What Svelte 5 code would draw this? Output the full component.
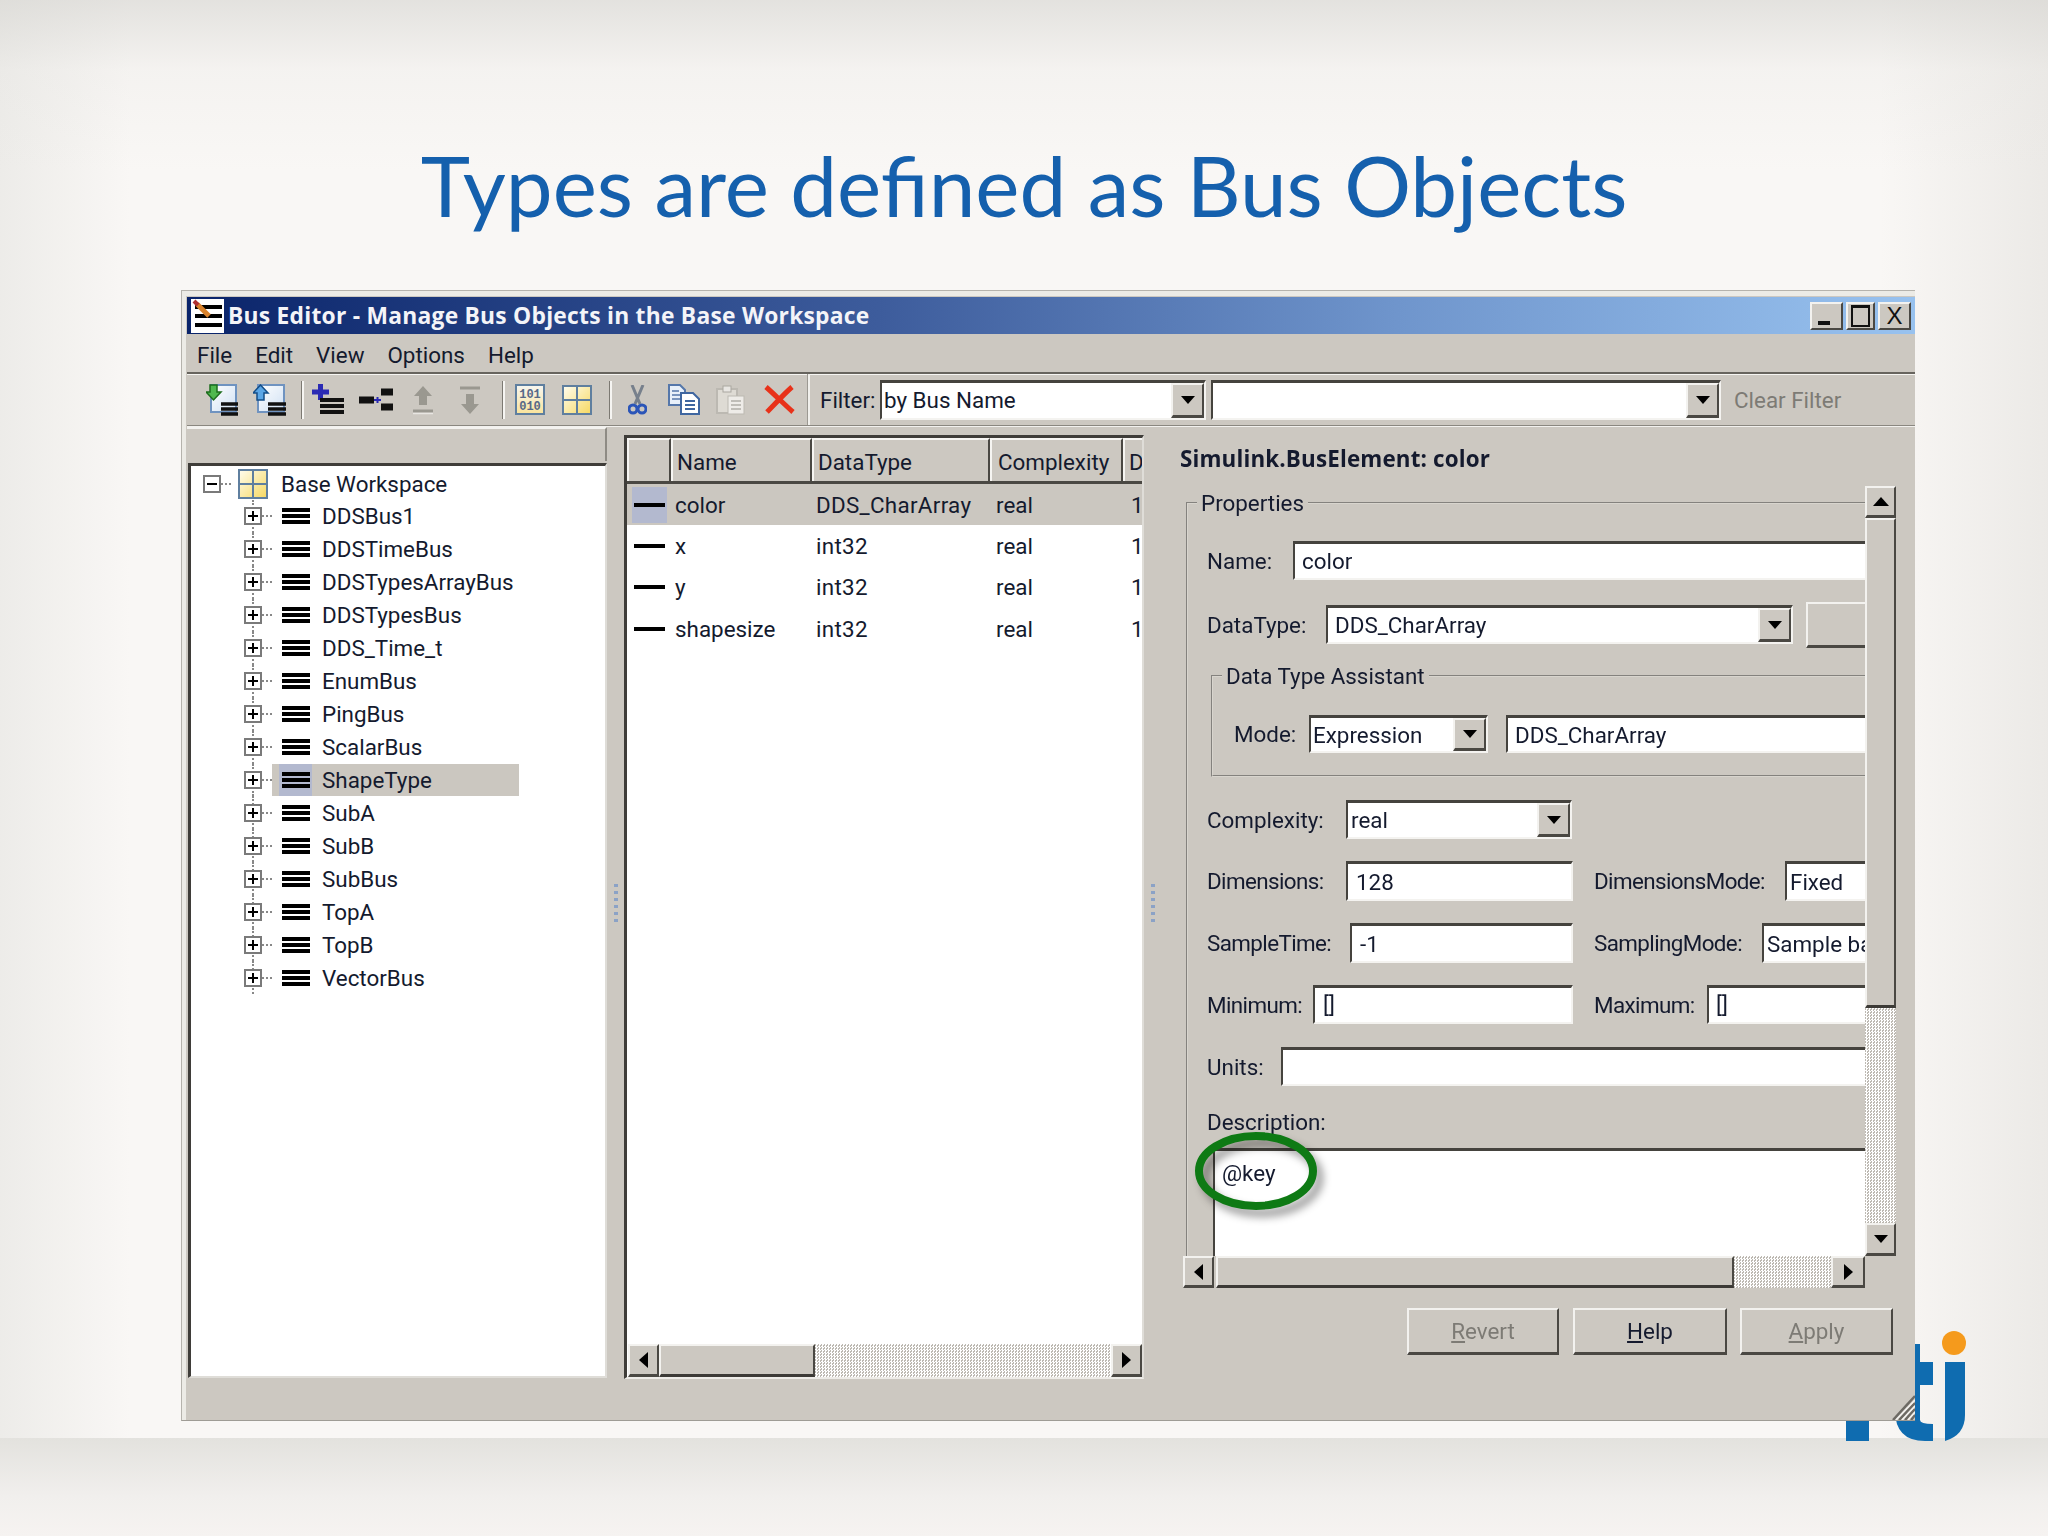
<script>
  const buses = ['DDSBus1','DDSTimeBus','DDSTypesArrayBus','DDSTypesBus','DDS_Time_t','EnumBus','PingBus','ScalarBus','ShapeType','SubA','SubB','SubBus','TopA','TopB','VectorBus'];
  const rows = [
    { n: 'color', t: 'DDS_CharArray', c: 'real', d: '1', sel: true },
    { n: 'x', t: 'int32', c: 'real', d: '1' },
    { n: 'y', t: 'int32', c: 'real', d: '1' },
    { n: 'shapesize', t: 'int32', c: 'real', d: '1' }
  ];
</script>

{#snippet gridIcon(w, h)}
  <svg class="ico" width={w} height={h} viewBox="0 0 30 30">
    <defs><linearGradient id="yg" x1="0" y1="0" x2="1" y2="1"><stop offset="0" stop-color="#fffdf0"/><stop offset="1" stop-color="#f6d860"/></linearGradient></defs>
    <rect x="1" y="1" width="28" height="28" fill="url(#yg)" stroke="#5f7f9f" stroke-width="2"/>
    <path d="M15 1V29M1 15H29" stroke="#5f7f9f" stroke-width="2"/>
  </svg>
{/snippet}

{#snippet arrowBtn()}
  <span class="btn3d drop"><i class="arr down"></i></span>
{/snippet}

<div class="slide">
  <h1>Types are defined as Bus Objects</h1>

  <div class="window">
    <div class="titlebar">
      <svg class="appicon" width="33" height="34" viewBox="0 0 33 34">
        <rect width="33" height="34" fill="#fff"/>
        <path d="M4 8H31M4 17H31M4 26H31" stroke="#000" stroke-width="4"/>
        <path d="M6 5L18 17" stroke="#d9822b" stroke-width="5"/>
        <path d="M3 2L7 6" stroke="#b03030" stroke-width="4"/>
      </svg>
      <span class="wintitle">Bus Editor - Manage Bus Objects in the Base Workspace</span>
      <div class="winbtns">
        <span class="wbtn"><i class="w-min"></i></span>
        <span class="wbtn wm"><i class="w-max"></i></span>
        <span class="wbtn w-x">X</span>
      </div>
    </div>

    <div class="menu">
      <span>File</span><span>Edit</span><span>View</span><span>Options</span><span>Help</span>
    </div>

    <div class="tools">
      <svg class="ico" width="32" height="32" viewBox="0 0 32 32">
        <defs><linearGradient id="pg" x1="0" y1="0" x2="1" y2="1"><stop offset="0" stop-color="#fff"/><stop offset="1" stop-color="#cfe0f3"/></linearGradient></defs>
        <rect x="5" y="1" width="25" height="27" fill="url(#pg)" stroke="#6f93c0" stroke-width="2"/>
        <path d="M15 20H32M15 25H32M15 30H32" stroke="#111" stroke-width="3.5"/>
        <path d="M4 1H11V8H15L7.500 16L0 8H4Z" fill="#4fb84f" stroke="#1d6d1d" stroke-width="1.500"/>
      </svg>
      <svg class="ico ml15" width="33" height="32" viewBox="0 0 33 32">
        <rect x="5" y="1" width="26" height="27" fill="url(#pg)" stroke="#6f93c0" stroke-width="2"/>
        <path d="M15 20H33M15 25H33M15 30H33" stroke="#111" stroke-width="3.500"/>
        <path d="M4 16H11V9H15L7.500 1L0 9H4Z" fill="#5aa6e6" stroke="#134d88" stroke-width="1.500"/>
      </svg>
      <i class="sep ml15"></i>
      <svg class="ico ml8" width="33" height="31" viewBox="0 0 33 31">
        <path d="M0 8H17M8.500 0V16" stroke="#2a2ab4" stroke-width="5"/>
        <path d="M8 16H32M8 22H32M8 28H32" stroke="#111" stroke-width="4"/>
      </svg>
      <svg class="ico ml14" width="34" height="24" viewBox="0 0 34 24">
        <path d="M0 12H15M22 4H34M22 19H34" stroke="#111" stroke-width="7"/>
        <path d="M15 12H22M18.500 9V15" stroke="#2a2ab4" stroke-width="2"/>
      </svg>
      <svg class="ico ml20" width="20" height="30" viewBox="0 0 20 30">
        <path d="M10 1L19 11H14V20H6V11H1Z" fill="#9a9890"/><path d="M0 26H20" stroke="#9a9890" stroke-width="3"/><path d="M0 28.500H20" stroke="#e8e6e2" stroke-width="1.500"/>
      </svg>
      <svg class="ico ml27" width="20" height="30" viewBox="0 0 20 30">
        <path d="M0 3H20" stroke="#9a9890" stroke-width="3"/><path d="M10 29L19 19H14V9H6V19H1Z" fill="#9a9890"/>
      </svg>
      <i class="sep ml22"></i>
      <svg class="ico ml10" width="30" height="31" viewBox="0 0 30 31">
        <defs><linearGradient id="yg2" x1="0" y1="0" x2="0" y2="1"><stop offset="0" stop-color="#f6f6f2"/><stop offset="1" stop-color="#fae39a"/></linearGradient></defs>
        <rect x="1" y="1" width="28" height="29" fill="url(#yg2)" stroke="#5f7f9f" stroke-width="2"/>
        <text x="15" y="13.500" class="bits">101</text>
        <text x="15" y="26" class="bits">010</text>
      </svg>
      <span class="ml17 inl">{@render gridIcon(30, 30)}</span>
      <i class="sep ml17"></i>
      <svg class="ico ml16" width="19" height="30" viewBox="0 0 19 30">
        <path d="M4 0L12 19M15 0L7 19" stroke="#77808c" stroke-width="3"/>
        <circle cx="5" cy="24" r="4" fill="none" stroke="#2b55b8" stroke-width="3"/>
        <circle cx="14" cy="24" r="4" fill="none" stroke="#2b55b8" stroke-width="3"/>
      </svg>
      <svg class="ico ml21" width="32" height="31" viewBox="0 0 32 31">
        <path d="M1 1H12L17 6V21H1Z" fill="#e8f0fa" stroke="#5577aa" stroke-width="2"/>
        <path d="M4 7H11M4 11H13M4 15H13" stroke="#5577aa" stroke-width="1.500"/>
        <path d="M13 9H25L31 15V30H13Z" fill="#fff" stroke="#3f66a0" stroke-width="2"/>
        <path d="M17 17H27M17 21H27M17 25H27" stroke="#3f66a0" stroke-width="1.800"/>
      </svg>
      <svg class="ico ml16" width="29" height="31" viewBox="0 0 29 31">
        <rect x="1" y="5" width="20" height="24" fill="#dedbd4" stroke="#bcb9b2" stroke-width="2"/>
        <rect x="7" y="2" width="8" height="6" fill="#e8e6e2" stroke="#aaa7a0"/>
        <rect x="12" y="12" width="16" height="18" fill="#eeece8" stroke="#bcb9b2"/>
        <path d="M15 17H25M15 21H25M15 25H25" stroke="#b0ada6" stroke-width="1.500"/>
      </svg>
      <svg class="ico ml19" width="31" height="29" viewBox="0 0 31 29">
        <path d="M2 2C10 9 21 20 29 27M28 2C20 9 10 20 3 27" stroke="#e8321a" stroke-width="5" fill="none"/>
      </svg>
      <i class="vsep ml12"></i>
      <span class="ml10 filterlbl">Filter:</span>
      <div class="f combo c1"><span>by Bus Name</span>{@render arrowBtn()}</div>
      <div class="f combo c2"><span></span>{@render arrowBtn()}</div>
      <span class="clear">Clear Filter</span>
    </div>

    <div class="body">
      <div class="leftcol">
        <div class="treehead"></div>
        <div class="tree">
          <div class="root">
            <i class="tw"><b class="h"></b></i><i class="dots1"></i>
            {@render gridIcon(30, 30)}
            <span class="rootlbl">Base Workspace</span>
          </div>
          {#each buses as b}
            <div class="tr">
              <i class="tw"><b class="h"></b><b class="v"></b></i><i class="dots2"></i>
              <div class="node" class:sel={b === 'ShapeType'}>
                <span class="busbg"><i class="bus"></i></span>
                <span class="blbl">{b}</span>
              </div>
            </div>
          {/each}
        </div>
      </div>

      <div class="split"><i></i></div>

      <div class="center">
        <div class="thead">
          <span class="th c0"></span><span class="th c1c">Name</span><span class="th c2c">DataType</span><span class="th c3c">Complexity</span><span class="th c4c">D</span>
        </div>
        <div class="tbody">
          {#each rows as r}
            <div class="trow" class:sel={r.sel}>
              <span class="dashcell"><i></i></span>
              <span class="td c1d">{r.n}</span>
              <span class="td c2d">{r.t}</span>
              <span class="td c3d">{r.c}</span>
              <span class="td c4d">{r.d}</span>
            </div>
          {/each}
        </div>
        <div class="hs tablehs">
          <span class="btn3d sb l30"><i class="arr left"></i></span>
          <span class="btn3d thumb t155"></span>
          <span class="check"></span>
          <span class="btn3d sb l30"><i class="arr right"></i></span>
        </div>
      </div>

      <div class="split s2"><i></i></div>

      <div class="rpanel">
        <div class="rhead">Simulink.BusElement: color</div>
        <div class="pane">
          <div class="view">
            <fieldset class="outer">
              <legend>Properties</legend>
              <div class="row"><label class="w85">Name:</label><div class="f grow"><span>color</span></div></div>
              <div class="row m25"><label class="w118">DataType:</label><div class="f combo dt"><span>DDS_CharArray</span>{@render arrowBtn()}</div><span class="btn3d extra"></span></div>
              <fieldset class="inner">
                <legend>Data Type Assistant</legend>
                <div class="row h38"><label class="w75">Mode:</label><div class="f combo mode"><span>Expression</span>{@render arrowBtn()}</div><div class="f grow ml18"><span>DDS_CharArray</span></div></div>
              </fieldset>
              <div class="row m23"><label class="w138">Complexity:</label><div class="f combo cw"><span>real</span>{@render arrowBtn()}</div></div>
              <div class="row m22 h40"><label class="w138 nar">Dimensions:</label><div class="f lw"><span>128</span></div><label class="w191 ml21 nar">DimensionsMode:</label><div class="f grow"><span class="tight">Fixed</span></div></div>
              <div class="row m22 h40"><label class="w142 nar">SampleTime:</label><div class="f lw2"><span>-1</span></div><label class="w168 ml21 nar">SamplingMode:</label><div class="f grow"><span class="tight">Sample ba</span></div></div>
              <div class="row m22"><label class="w105 nar">Minimum:</label><div class="f lw3"><span>[]</span></div><label class="w113 ml21 nar">Maximum:</label><div class="f grow"><span>[]</span></div></div>
              <div class="row m23"><label class="w73">Units:</label><div class="f grow"></div></div>
              <div class="desc">Description:</div>
              <div class="f area"><span>@key</span></div>
            </fieldset>
          </div>
          <div class="vs">
            <span class="btn3d sb up"><i class="arr upa"></i></span>
            <span class="btn3d thumb vthumb"></span>
            <span class="check"></span>
            <span class="btn3d sb dn"><i class="arr down"></i></span>
          </div>
          <div class="hs formhs">
            <span class="btn3d sb l30"><i class="arr left"></i></span>
            <span class="btn3d thumb t521"></span>
            <span class="check"></span>
            <span class="btn3d sb l34"><i class="arr right"></i></span>
          </div>
        </div>
        <div class="actions">
          <span class="btn3d act a1 off"><u>R</u>evert</span>
          <span class="btn3d act a2"><u>H</u>elp</span>
          <span class="btn3d act a3 off"><u>A</u>pply</span>
        </div>
      </div>
    </div>

    <svg class="grip" width="24" height="28" viewBox="0 0 24 28">
      <path d="M2 28L24 4M8 28L24 11M14 28L24 17M20 28L24 23" stroke="#6d6a64" stroke-width="2.500"/>
      <path d="M5 28L24 8M11 28L24 14M17 28L24 20" stroke="#f4f3f0" stroke-width="1.500"/>
    </svg>
  </div>

  <div class="footer"></div>

  <svg class="logo" width="2048" height="1536" viewBox="0 0 2048 1536">
    <path d="M1846 1400H1869V1441H1846Z" fill="#0f6cb0"/>
    <path d="M1895 1344H1920V1362H1933V1385H1920V1420Q1920 1424 1933 1424V1441H1925Q1895 1441 1895 1410Z" fill="#0f6cb0"/>
    <path d="M1945 1362H1965V1415Q1965 1435 1945 1441Z" fill="#0f6cb0"/>
    <circle cx="1954" cy="1343" r="12" fill="#f59a1c"/>
  </svg>

  <svg class="oval" width="2048" height="1536" viewBox="0 0 2048 1536">
    <ellipse cx="1256" cy="1171" rx="57" ry="35" fill="none" stroke="#0e7a14" stroke-width="8"/>
  </svg>
</div>

<style>
  :global(body) { margin: 0; }
  .slide {
    position: relative; width: 2048px; height: 1536px; overflow: hidden;
    background:
      linear-gradient(180deg, rgba(214,213,209,.62) 0, rgba(230,229,226,.25) 70px, rgba(255,255,255,0) 170px),
      linear-gradient(90deg, rgba(222,222,218,.45) 0, rgba(255,255,255,0) 130px, rgba(255,255,255,0) 1880px, rgba(222,220,216,.5) 2048px),
      #f9f7f5;
    font-family: Roboto, "Liberation Sans", sans-serif;
    color: #141a2e;
  }
  h1 {
    margin: 0; height: 290px; box-sizing: border-box; padding-top: 135px;
    line-height: 100px; text-align: center; font-family: Lato, "Open Sans", sans-serif;
    font-weight: 400; font-size: 83.600px; color: #1560ad;
  }
  .window {
    position: relative; z-index: 2; margin-left: 181px; width: 1734px; height: 1131px;
    box-sizing: border-box; background: #ccc8c1; padding: 6px 0 0 5px;
    border-top: 1px solid #b5b3ad; border-left: 1px solid #b5b3ad; border-bottom: 1px solid #9f9c95;
    box-shadow: inset 5px 6px 0 -1px #ecebe6;
    display: flex; flex-direction: column; font-size: 22.400px; filter: blur(.35px);
  }
  .titlebar {
    height: 37px; flex: none; display: flex; align-items: center; padding-left: 4px;
    background: linear-gradient(90deg, #0a246a 0, #3d5c9c 40%, #6f95cc 70%, #98c2ef 100%);
  }
  .appicon { flex: none; }
  .wintitle { color: #f4f4f8; font-family: "Open Sans", sans-serif; font-weight: 700; font-size: 22.800px; letter-spacing: .25px; margin-left: 4px; white-space: nowrap; }
  .winbtns { margin-left: auto; display: flex; gap: 3px; padding-right: 4px; }
  .wbtn {
    width: 33px; height: 28px; background: #ccc8c1; box-sizing: border-box;
    border-top: 2px solid #f3f2ef; border-left: 2px solid #f3f2ef; border-bottom: 2px solid #4a4843; border-right: 2px solid #4a4843;
    display: flex; align-items: center; justify-content: center; position: relative;
    font-family: "Liberation Sans", sans-serif; font-size: 24px; color: #111;
  }
  .wm { width: 29px; }
  .w-min { position: absolute; left: 6px; bottom: 3px; width: 12px; height: 4px; background: #111; }
  .w-max { width: 15px; height: 17px; border: 2px solid #111; border-top-width: 3px; }
  .menu {
    height: 38px; flex: none; display: flex; align-items: center; gap: 23px;
    padding: 3px 0 0 10px; box-sizing: border-box;
  }
  .tools {
    height: 54px; flex: none; box-sizing: border-box; display: flex; align-items: center;
    padding-left: 19px; border-top: 2px solid #67645e; border-bottom: 1px solid #8a8780;
    box-shadow: inset 0 1px 0 #f6f5f2, 0 1px 0 #f2f1ee;
  }
  .ico { display: block; flex: none; }
  .inl { display: block; flex: none; }
  .bits { font-family: "Liberation Mono", monospace; font-size: 12px; font-weight: 700; fill: #566888; text-anchor: middle; }
  .sep { display: block; width: 3px; height: 38px; flex: none; background: linear-gradient(90deg, #7c7972 0 1.500px, #f6f5f2 1.500px); }
  .vsep { display: block; width: 2px; height: 51px; flex: none; background: #f1f0ec; border-left: 1px solid #9c9992; }
  .ml8 { margin-left: 8px; } .ml10 { margin-left: 10px; } .ml12 { margin-left: 12px; }
  .ml14 { margin-left: 14px; } .ml15 { margin-left: 15px; } .ml16 { margin-left: 16px; } .ml17 { margin-left: 17px; }
  .ml18 { margin-left: 18px; } .ml19 { margin-left: 19px; } .ml20 { margin-left: 20px; } .ml21 { margin-left: 21px; }
  .ml22 { margin-left: 22px; } .ml27 { margin-left: 27px; }
  .filterlbl { width: 60px; flex: none; }
  .f {
    background: #fff; box-sizing: border-box; flex: none; height: 39px;
    border-top: 3px solid #45433e; border-left: 2px solid #45433e; border-bottom: 2px solid #f4f3f0; border-right: 2px solid #f4f3f0;
    display: flex; align-items: center; white-space: nowrap; padding-left: 5px;
  }
  .combo { padding-left: 2px; justify-content: space-between; padding-right: 0; }
  .c1 { width: 326px; height: 40px; }
  .c2 { width: 510px; height: 40px; margin-left: 5px; }
  .clear { margin-left: 13px; color: #7d7b75; }
  .btn3d {
    display: block; box-sizing: border-box; background: #ccc8c1; flex: none;
    border-top: 2px solid #f3f2ef; border-left: 2px solid #f3f2ef; border-bottom: 3px solid #4a4843; border-right: 2px solid #4a4843;
  }
  .drop { width: 33px; height: 100%; display: flex; align-items: center; justify-content: center; }
  .arr { display: block; width: 0; height: 0; border: 0 solid transparent; }
  .arr.down { border-width: 8px 7px 0; border-top-color: #000; }
  .arr.upa { border-width: 0 8px 9px; border-bottom-color: #000; }
  .arr.left { border-width: 8px 9px 8px 0; border-right-color: #000; }
  .arr.right { border-width: 8px 0 8px 9px; border-left-color: #000; }

  .body { flex: 1; display: flex; min-height: 0; margin-top: 1px; }
  .leftcol { width: 420px; flex: none; display: flex; flex-direction: column; }
  .treehead {
    height: 34px; flex: none; box-sizing: border-box; border-top: 2px solid #f3f2ef; border-right: 2px solid #8e8b84;
    background: #ccc8c1;
  }
  .tree {
    margin: 2px 0 0 1px; height: 915px; box-sizing: border-box; background: #fff; flex: none;
    border-top: 3px solid #3f3d39; border-left: 3px solid #3f3d39; border-bottom: 2px solid #dfddd8; border-right: 2px solid #dfddd8;
    padding-top: 1px;
  }
  .root { height: 33px; display: flex; align-items: center; padding-left: 12px; }
  .tw {
    display: block; position: relative; flex: none; width: 18px; height: 18px; box-sizing: border-box;
    border: 2px solid #7a7a7a; background: #fff; z-index: 1;
  }
  .tw .h { position: absolute; left: 2px; right: 2px; top: 6px; height: 2px; background: #000; }
  .tw .v { position: absolute; top: 2px; bottom: 2px; left: 6px; width: 2px; background: #000; }
  .dots1 { display: block; width: 10px; margin-right: 7px; border-top: 2px dotted #888; flex: none; }
  .dots2 { display: block; width: 10px; border-top: 2px dotted #888; flex: none; }
  .rootlbl { margin-left: 13px; }
  .tr {
    height: 32.950px; display: flex; align-items: center; padding-left: 53px; position: relative;
  }
  .tr::before { content: ""; position: absolute; left: 61px; top: 0; bottom: 0; border-left: 2px dotted #888; }
  .node { width: 247px; height: 100%; display: flex; align-items: center; padding-left: 7px; box-sizing: border-box; }
  .node.sel { background: #cbc7c0; }
  .busbg { display: flex; align-items: center; justify-content: center; width: 33px; height: 100%; flex: none; }
  .node.sel .busbg { background: #b3b9cf; }
  .bus { display: block; width: 28px; height: 16px; background: repeating-linear-gradient(180deg, #000 0 4px, transparent 4px 6px); }
  .blbl { margin-left: 10px; white-space: nowrap; }

  .split { width: 17px; flex: none; display: flex; align-items: center; justify-content: center; }
  .split.s2 { width: 37px; justify-content: flex-start; padding-left: 7px; box-sizing: border-box; }
  .split i {
    display: block; width: 4px; height: 40px; margin-bottom: 40px;
    background: repeating-linear-gradient(180deg, #8ba2c6 0 3px, transparent 3px 7px);
  }
  .center {
    width: 520px; flex: none; margin-top: 8px; height: 944px; box-sizing: border-box; background: #fff;
    border-top: 3px solid #3f3d39; border-left: 3px solid #3f3d39; border-bottom: 2px solid #eeece8; border-right: 2px solid #dfddd8;
    display: flex; flex-direction: column; overflow: hidden;
  }
  .thead { display: flex; height: 43px; flex: none; background: #ccc8c1; border-bottom: 3px solid #4a4843; }
  .th {
    display: flex; align-items: center; padding-left: 4px; box-sizing: border-box; flex: none; height: 100%; overflow: hidden;
    border-top: 2px solid #f6f5f2; border-left: 2px solid #f6f5f2; border-right: 2px solid #4a4843; padding-top: 3px;
  }
  .c0 { width: 44px; } .c1c { width: 141px; } .c2c { width: 178px; } .c3c { width: 133px; padding-left: 6px; } .c4c { width: 30px; }
  .tbody { flex: 1; min-height: 0; }
  .trow { height: 41.300px; display: flex; align-items: center; position: relative; }
  .trow.sel { background: #cbc7c0; }
  .dashcell { display: flex; align-items: center; justify-content: center; width: 35px; height: 36px; margin-left: 5px; flex: none; }
  .trow.sel .dashcell { background: #b3b9cf; }
  .dashcell i { display: block; width: 31px; height: 4px; background: #000; }
  .td { white-space: nowrap; flex: none; }
  .c1d { width: 141px; margin-left: 8px; }
  .c2d { width: 180px; letter-spacing: .3px; }
  .c3d { width: 135px; }
  .c4d { width: 20px; }
  .hs { display: flex; flex: none; }
  .tablehs { height: 33px; margin-left: 1px; }
  .sb { display: flex; align-items: center; justify-content: center; }
  .l30 { width: 31px; } .l34 { width: 34px; }
  .thumb { border-bottom-color: #3c3a36; }
  .t155 { width: 156px; border-left-width: 2px; }
  .t521 { width: 518px; margin-left: 2px; }
  .check {
    display: block; flex: 1; min-height: 0;
    background: repeating-conic-gradient(#fff 0 25%, #bdb9b2 0 50%) 0 0 / 3px 3px;
  }

  .rpanel { flex: none; width: 735px; padding-top: 17px; box-sizing: border-box; padding-left: 2px; }
  .rhead { height: 30px; line-height: 30px; font-family: "Open Sans", sans-serif; font-weight: 700; font-size: 22.400px; letter-spacing: .15px; margin-left: -3px; white-space: nowrap; }
  .pane { margin-top: 12px; display: grid; grid-template-columns: 682px 31px; grid-template-rows: 770px 32px; }
  .view { overflow: hidden; }
  fieldset { margin: 0; padding: 0; min-width: 0; border: 2px groove #d8d5ce; }
  legend { padding: 0 4px; line-height: 30px; white-space: nowrap; }
  .outer { width: 900px; margin: 2px 0 0 3px; height: 900px; padding: 23px 0 0 19px; box-sizing: border-box; }
  .outer > legend { margin-left: -10px; }
  .inner { width: 900px; margin: 17px 0 0 4px; padding: 24px 0 22px 21px; }
  .inner > legend { margin-left: -12px; }
  .row { height: 39px; display: flex; align-items: center; white-space: nowrap; }
  .h38 { height: 38px; }
  .h40 { height: 40px; }
  .h38 .f { height: 38px; }
  .h40 .f { height: 40px; }
  .m25 { margin-top: 25px; } .m23 { margin-top: 23px; } .m22 { margin-top: 22px; }
  label { display: block; flex: none; }
  .nar { letter-spacing: -.6px; }
  .w85 { width: 86px; } .w118 { width: 119px; } .w75 { width: 75px; } .w138 { width: 139px; }
  .w142 { width: 143px; } .w191 { width: 191px; } .w168 { width: 168px; } .w105 { width: 106px; }
  .w113 { width: 113px; } .w73 { width: 74px; }
  .grow { width: 800px; padding-left: 7px; }
  .grow .tight { margin-left: -4px; }
  .dt { width: 467px; padding-left: 7px; }
  .extra { width: 100px; height: 46px; margin-left: 13px; }
  .mode { width: 179px; }
  .lw { width: 227px; padding-left: 8px; }
  .cw { width: 226px; padding-left: 3px; }
  .lw2 { width: 223px; padding-left: 8px; }
  .lw3 { width: 260px; padding-left: 8px; }
  .desc { height: 30px; line-height: 30px; margin-top: 21px; }
  .area { width: 800px; height: 200px; margin: 11px 0 0 6px; align-items: flex-start; padding: 9px 0 0 7px; }
  .vs { display: flex; flex-direction: column; grid-row: 1; grid-column: 2; }
  .vs .up { height: 32px; }
  .vthumb { height: 490px; }
  .vs .dn { height: 33px; }
  .formhs { grid-row: 2; grid-column: 1; }
  .actions { display: flex; margin: 20px 0 0 224px; }
  .act {
    height: 47px; display: flex; align-items: center; justify-content: center;
  }
  .a1 { width: 152px; } .a2 { width: 154px; margin-left: 14px; } .a3 { width: 153px; margin-left: 13px; }
  .off { color: #7d7b75; }
  .grip { position: absolute; right: 0; bottom: 0; }
  .footer {
    margin-top: 17px; height: 98px;
    background: linear-gradient(180deg, #e3e2de 0, #f1efed 60%, #f6f3f1 100%);
  }
  .logo { position: absolute; left: 0; top: 0; z-index: 1; }
  .oval { position: absolute; left: 0; top: 0; z-index: 3; pointer-events: none; filter: drop-shadow(6px 7px 4px rgba(0,0,0,.4)); }
</style>
